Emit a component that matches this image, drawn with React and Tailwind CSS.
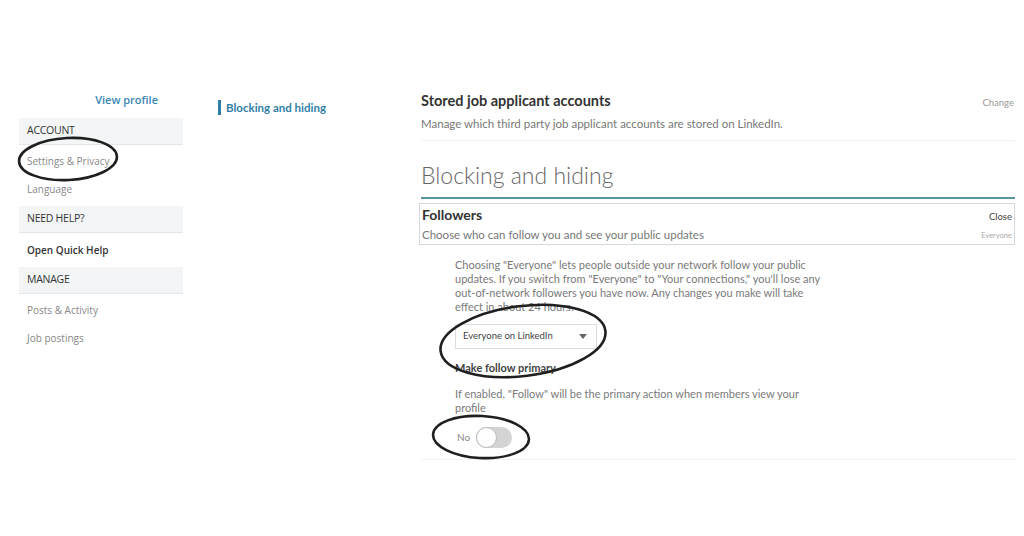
import React from 'react'

const side = { fontFamily: '"Open Sans", "Liberation Sans", sans-serif' }
const main = { fontFamily: 'Lato, "Liberation Sans", sans-serif' }

function SideHeader({ children }) {
  return (
    <div className="h-[27px] flex items-center pl-2 bg-[#f3f5f6] border-b border-[#e3e6e8] text-[10.5px] text-[#333] tracking-tight">
      {children}
    </div>
  )
}

function SideItem({ children, bold, h = 'h-[28px]' }) {
  return (
    <div className={`${h} flex items-center pl-2 text-[10px] ${bold ? 'font-semibold text-[#333]' : 'text-[#888]'}`}>
      {children}
    </div>
  )
}

export default function App() {
  return (
    <div className="relative w-[1024px] h-[536px] bg-white overflow-hidden">
      <div className="flex pt-[90px]">
        {/* left nav */}
        <div className="ml-[19px] w-[164px]" style={side}>
          <div className="h-[28px] flex items-start justify-end pr-[25px] pt-[2px] text-[11px] font-semibold text-[#3a87b4]">
            View profile
          </div>
          <SideHeader>ACCOUNT</SideHeader>
          <div className="pt-[2px] pb-[3px]">
            <SideItem>Settings &amp; Privacy</SideItem>
            <SideItem>Language</SideItem>
          </div>
          <SideHeader>NEED HELP?</SideHeader>
          <SideItem bold h="h-[34px]">Open Quick Help</SideItem>
          <SideHeader>MANAGE</SideHeader>
          <div className="pt-[2px]">
            <SideItem>Posts &amp; Activity</SideItem>
            <SideItem>Job postings</SideItem>
          </div>
        </div>

        {/* section nav */}
        <div className="ml-[35px] w-[203px] pt-[10px]" style={main}>
          <div className="flex items-center border-l-[3px] border-[#2f7fa8] pl-[5px] h-[15px] text-[11.5px] font-bold text-[#2f7fa8]">
            Blocking and hiding
          </div>
        </div>

        {/* main */}
        <div className="w-[594px]" style={main}>
          <div className="border-b border-[#eef0f1] pb-[8px]">
            <div className="flex items-center justify-between">
              <div className="text-[14.5px] font-bold text-[#333]">Stored job applicant accounts</div>
              <div className="text-[9.5px] text-[#999] pr-[1px] pt-[4px]">Change</div>
            </div>
            <div className="mt-[3px] text-[11.5px] text-[#777]">
              Manage which third party job applicant accounts are stored on LinkedIn.
            </div>
          </div>

          <div className="mt-[23px] text-[23px] font-light text-[#666] leading-none">Blocking and hiding</div>
          <div className="mt-[10px] h-[2px] bg-[#5a95a2]" />

          <div className="mt-[4px] -ml-[2px] h-[42px] border border-[#d6d9db] px-[2px] pt-[3px]">
            <div className="flex items-end justify-between">
              <div className="text-[14px] font-bold text-[#333] leading-[16px]">Followers</div>
              <div className="text-[9.5px] text-[#444] leading-[12px]">Close</div>
            </div>
            <div className="flex items-end justify-between mt-[5px]">
              <div className="text-[11.5px] text-[#777] leading-[14px]">Choose who can follow you and see your public updates</div>
              <div className="text-[7.5px] text-[#aaa] leading-[12px]">Everyone</div>
            </div>
          </div>

          <div className="pl-[34px] pt-[13px] pb-[11px] border-b border-[#f0f1f2]">
            <p className="w-[366px] text-[11px] leading-[14px] text-[#7a7a7a]">
              Choosing "Everyone" lets people outside your network follow your public updates. If you switch from "Everyone" to "Your connections," you'll lose any out-of-network followers you have now. Any changes you make will take effect in about 24 hours.
            </p>
            <div className="mt-[10px] w-[142px] h-[25px] border border-[#dcdcdc] flex items-center justify-between pl-[7px] pr-[9px]">
              <span className="text-[9.5px] text-[#444]">Everyone on LinkedIn</span>
              <svg width="8" height="5" viewBox="0 0 8 5"><path d="M0 0h8L4 5z" fill="#666" /></svg>
            </div>
            <div className="mt-[12px] text-[11px] leading-[14px] font-bold text-[#444]">Make follow primary</div>
            <p className="mt-[12px] w-[366px] text-[11px] leading-[14px] text-[#7a7a7a]">
              If enabled, "Follow" will be the primary action when members view your profile
            </p>
            <div className="mt-[12px] flex items-center gap-[6px] pl-[2px]">
              <span className="text-[10px] text-[#888]">No</span>
              <div className="relative w-[36px] h-[21px] rounded-full bg-[#d4d4d4]">
                <div className="absolute left-0 top-0 w-[21px] h-[21px] rounded-full bg-white border border-[#b9b9b9]" />
              </div>
            </div>
          </div>
        </div>
      </div>

      {/* hand-drawn annotation circles */}
      <svg className="absolute inset-0 pointer-events-none" width="1024" height="536">
        <g fill="none" stroke="#1f1f1f" strokeWidth="2.6">
          <ellipse cx="68" cy="159" rx="49" ry="21" transform="rotate(-3 68 159)" />
          <ellipse cx="523" cy="341" rx="83" ry="35" transform="rotate(-7 523 341)" />
          <ellipse cx="481" cy="437" rx="48" ry="21" transform="rotate(3 481 437)" />
        </g>
      </svg>
    </div>
  )
}
